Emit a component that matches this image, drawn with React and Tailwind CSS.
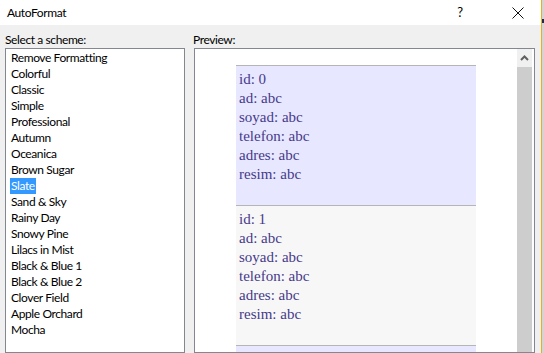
import React from 'react'

const schemes = [
  'Remove Formatting', 'Colorful', 'Classic', 'Simple', 'Professional', 'Autumn',
  'Oceanica', 'Brown Sugar', 'Slate', 'Sand & Sky', 'Rainy Day', 'Snowy Pine',
  'Lilacs in Mist', 'Black & Blue 1', 'Black & Blue 2', 'Clover Field',
  'Apple Orchard', 'Mocha',
]

const fields = ['ad', 'soyad', 'telefon', 'adres', 'resim']

const Record = ({ id, alt, empty }) => (
  <div className={`h-[140px] w-[240px] shrink-0 border-t border-[#b5b5b5] pl-[3px] pt-[4px] ${alt ? 'bg-[#f7f7f7]' : 'bg-[#e7e7ff]'}`}>
    {!empty && (
      <>
        <div className="leading-[19px]">id: {id}</div>
        {fields.map((f) => (
          <div key={f} className="leading-[19px]">{f}: abc</div>
        ))}
      </>
    )}
  </div>
)

export default function App() {
  return (
    <div className="w-[544px] h-[353px] overflow-hidden flex bg-[#f0f0f0] text-[12px] tracking-[-0.4px] text-black font-['Segoe_UI','Lato',sans-serif]">
      <div className="w-[541px] flex flex-col">
        {/* Title bar */}
        <div className="h-[25px] shrink-0 bg-white flex items-center pl-[7px]">
          <span className="flex-1">AutoFormat</span>
          <span className="w-[10px] text-center mr-[47px] text-[13px]">?</span>
          <svg width="12" height="12" viewBox="0 0 12 12" className="mr-[17px]">
            <path d="M0.5 0.5 L11.5 11.5 M11.5 0.5 L0.5 11.5" stroke="#111" strokeWidth="1" />
          </svg>
        </div>

        {/* Body */}
        <div className="flex-1 flex pt-[6px] min-h-0">
          {/* Scheme list */}
          <div className="ml-[5px] w-[180px] flex flex-col">
            <div className="h-[17px] leading-[17px]">Select a scheme:</div>
            <div className="flex-1 bg-white border border-[#828790] pt-[1px] pl-[4px]">
              {schemes.map((s) => (
                <div key={s} className="h-[16px] leading-[16px]">
                  <span className={`px-[1px] inline-block ${s === 'Slate' ? 'bg-[#3399ff] text-white' : ''}`}>{s}</span>
                </div>
              ))}
            </div>
          </div>

          {/* Preview */}
          <div className="ml-[8px] flex-1 flex flex-col">
            <div className="h-[17px] leading-[17px]">Preview:</div>
            <div className="ml-[1px] mr-[6px] flex-1 bg-white border border-[#828790] flex min-h-0">
              <div className="w-[322px] pt-[16px] pl-[41px] flex flex-col text-[15px] tracking-normal text-[#463a8a] font-['Liberation_Serif',serif] overflow-hidden">
                <Record id={0} />
                <Record id={1} alt />
                <Record id={2} empty />
              </div>
              <div className="w-[15px] flex flex-col">
                <div className="h-[18px] flex items-center justify-center bg-[#f0f0f0]">
                  <svg width="9" height="6" viewBox="0 0 9 6">
                    <path d="M1 5 L4.5 1.5 L8 5" stroke="#606060" strokeWidth="2" fill="none" />
                  </svg>
                </div>
                <div className="flex-1 bg-[#cdcdcd]" />
              </div>
            </div>
          </div>
        </div>
      </div>
      {/* window edge */}
      <div className="w-[1px] bg-[#e8b020]" />
      <div className="flex-1 bg-[#d4d4d4] flex flex-col">
        <div className="h-[19px]" />
        <div className="h-[4px] bg-[#1e2a4a]" />
      </div>
    </div>
  )
}
